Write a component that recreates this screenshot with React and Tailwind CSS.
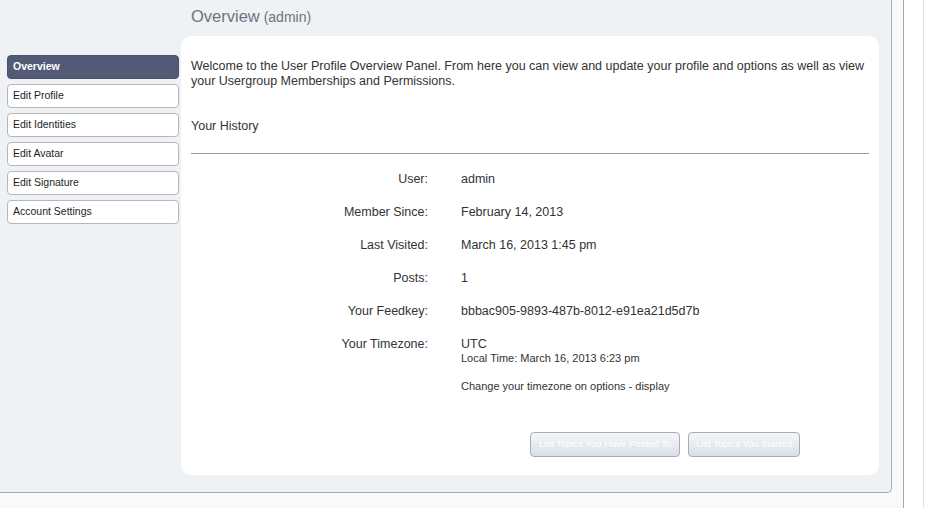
export default function App() {
  const rows = [
    ["User:", "admin"],
    ["Member Since:", "February 14, 2013"],
    ["Last Visited:", "March 16, 2013 1:45 pm"],
    ["Posts:", "1"],
    ["Your Feedkey:", "bbbac905-9893-487b-8012-e91ea21d5d7b"],
  ];
  const nav = ["Overview", "Edit Profile", "Edit Identities", "Edit Avatar", "Edit Signature", "Account Settings"];
  return (
    <div className="flex h-[508px] w-[927px] overflow-hidden bg-white text-[#333]" style={{ fontFamily: '"Liberation Sans", Arial, sans-serif' }}>
      <div className="flex w-[903px] shrink-0 flex-col bg-[#f7f9fb]">
        <div className="flex h-[493px] w-[892px] flex-col rounded-br-[5px] border-b border-r border-[#a9adb2] bg-[#eef2f5]">
          <div className="h-[36px] pl-[191px] pt-[5px] leading-[22px] text-[#6d7380]">
            <span className="text-[16.5px]">Overview</span>
            <span className="text-[14px]"> (admin)</span>
          </div>
          <div className="flex">
            <div className="ml-[7px] flex w-[172px] flex-col gap-[5px] pt-[19px]">
              {nav.map((n, i) => (
                <div
                  key={n}
                  className={
                    i === 0
                      ? "flex h-[24px] items-center rounded-[4px] border border-[#4a5169] bg-[#525a75] px-[5px] text-[10.5px] font-bold text-white"
                      : "flex h-[24px] items-center rounded-[4px] border border-[#b4b7bc] bg-white px-[5px] text-[10.5px] text-[#1e1e1e]"
                  }
                >
                  {n}
                </div>
              ))}
            </div>
            <div className="ml-[2px] flex h-[439px] w-[698px] flex-col rounded-[10px] bg-white pl-[10px] pr-[10px]">
              <p className="mt-[23px] text-[12.5px] leading-[15px]">
                Welcome to the User Profile Overview Panel. From here you can view and update your profile and options as well as view your Usergroup Memberships and Permissions.
              </p>
              <div className="mt-[29px] text-[12.5px] leading-[16px]">Your History</div>
              <div className="mt-[19px] h-px bg-[#9a9a9a]" />
              <div className="mt-[17px] flex flex-col gap-[17px] text-[12.5px] leading-[16px]">
                {rows.map(([l, v]) => (
                  <div key={l} className="flex">
                    <div className="w-[237px] text-right">{l}</div>
                    <div className="ml-[33px]">{v}</div>
                  </div>
                ))}
                <div className="flex">
                  <div className="w-[237px] text-right">Your Timezone:</div>
                  <div className="ml-[33px] flex flex-col">
                    <div>UTC</div>
                    <div className="text-[11px] leading-[13px]">Local Time: March 16, 2013 6:23 pm</div>
                    <div className="mt-[15px] text-[11px] leading-[13px]">Change your timezone on options - display</div>
                  </div>
                </div>
              </div>
              <div className="mt-[39px] flex gap-[8px] pl-[339px]">
                <div className="flex h-[25px] w-[150px] items-center justify-center whitespace-nowrap rounded-[4px] border border-[#a9adb2] bg-gradient-to-b from-[#f4f6f9] to-[#dae0e8] text-[9.5px] text-white">
                  List Topics You Have Posted To
                </div>
                <div className="flex h-[25px] w-[112px] items-center justify-center whitespace-nowrap rounded-[4px] border border-[#a9adb2] bg-gradient-to-b from-[#f4f6f9] to-[#dae0e8] text-[9.5px] text-white">
                  List Topics You Started
                </div>
              </div>
            </div>
          </div>
        </div>
      </div>
      <div className="h-full w-px bg-[#a8a8a8]" />
      <div className="h-full w-[19px] bg-white" />
      <div className="h-full w-px bg-[#e2e2e2]" />
      <div className="h-full flex-1 bg-white" />
    </div>
  );
}
